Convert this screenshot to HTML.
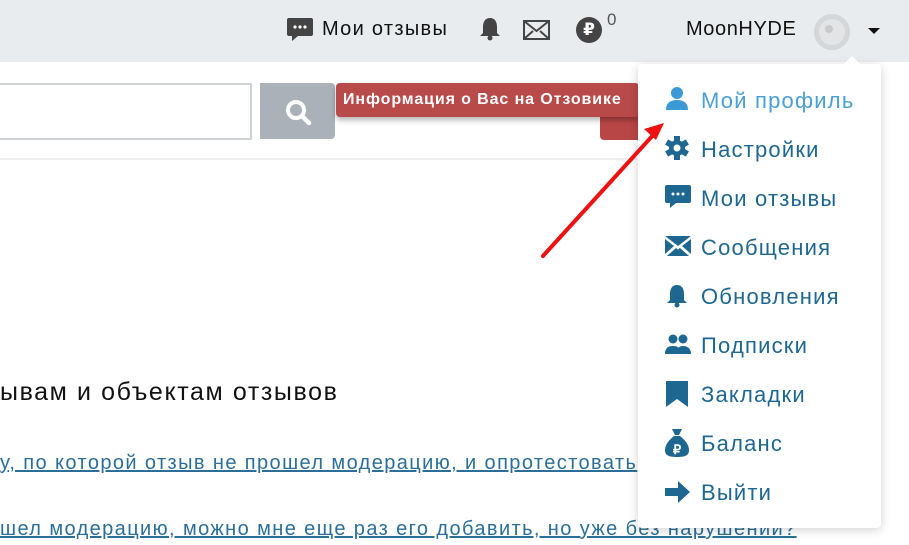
<!DOCTYPE html>
<html><head><meta charset="utf-8"><style>
body{margin:0;width:909px;height:545px;overflow:hidden;background:#fff;font-family:"Liberation Sans","DejaVu Sans",sans-serif;position:relative}
.a{position:absolute;white-space:nowrap}
#hdr{position:absolute;left:0;top:0;width:909px;height:62px;background:#e9ecef}
#menu{position:absolute;left:638px;top:64px;width:243px;height:464px;background:#fff;border-radius:4px;box-shadow:0 2px 10px rgba(0,0,0,.18)}
.it{position:absolute;left:63px;font-size:22px;letter-spacing:1.2px;color:#1d6790}
.ic{position:absolute;left:27px}
.lk{color:#2b6f98;text-decoration:underline;font-size:20px;letter-spacing:1.4px}
</style></head><body>
<div id="hdr"></div>
<svg class="a" style="left:287px;top:18px" width="26" height="24" viewBox="0 0 26 24"><path d="M2 0h22a2 2 0 0 1 2 2v14a2 2 0 0 1-2 2H11l-6 5v-5H2a2 2 0 0 1-2-2V2a2 2 0 0 1 2-2z" fill="#444"/><circle cx="8" cy="9" r="1.6" fill="#fff"/><circle cx="13" cy="9" r="1.6" fill="#fff"/><circle cx="18" cy="9" r="1.6" fill="#fff"/></svg>
<div class="a" style="left:322px;top:18px;font-size:20px;letter-spacing:1.3px;color:#111">Мои отзывы</div>
<svg class="a" style="left:479px;top:16px" width="22" height="26" viewBox="0 0 22 26"><path d="M11 2c-5 0-7 4-7 9v6l-3 3h20l-3-3v-6c0-5-2-9-7-9z" fill="#444"/><circle cx="11" cy="22" r="2.5" fill="#444"/></svg>
<svg class="a" style="left:523px;top:20px" width="27" height="20" viewBox="0 0 27 20"><rect x="1" y="1" width="25" height="18" fill="none" stroke="#444" stroke-width="2"/><path d="M1 1l12.5 10L26 1M1 19l9-8M26 19l-9-8" stroke="#444" stroke-width="2" fill="none"/></svg>
<div class="a" style="left:576px;top:17px;width:26px;height:26px;border-radius:50%;background:#444;color:#fff;font-size:17px;font-weight:bold;text-align:center;line-height:26px">₽</div>
<div class="a" style="left:607px;top:10px;font-size:17px;color:#555">0</div>
<div class="a" style="left:686px;top:18px;font-size:20px;letter-spacing:0.6px;color:#111">MoonHYDE</div>
<div class="a" style="left:814px;top:14px;width:26px;height:26px;border-radius:50%;border:5px solid #d4d6d8;background:#e2e4e6"></div>
<div class="a" style="left:825px;top:25px;width:8px;height:8px;border-radius:50%;background:#c8cacc"></div>
<div class="a" style="left:868px;top:28px;border:6px solid transparent;border-top:6px solid #111"></div>
<div class="a" style="left:0;top:158px;width:640px;height:2px;background:#eceef0"></div>
<div class="a" style="left:0;top:83px;width:250px;height:53px;border:2px solid #cfd3d6;border-left:none"></div>
<div class="a" style="left:260px;top:83px;width:75px;height:56px;background:#aab1b8;border-radius:0 4px 4px 0"></div>
<svg class="a" style="left:284px;top:98px" width="28" height="28" viewBox="0 0 28 28"><circle cx="12" cy="12" r="8" fill="none" stroke="#fff" stroke-width="4"/><path d="M18 18l7 7" stroke="#fff" stroke-width="4.5" stroke-linecap="round"/></svg>
<div class="a" style="left:600px;top:112px;width:40px;height:28px;background:#b94646;border-radius:0 0 0 4px"></div>
<div class="a" style="left:336px;top:83px;width:296px;height:34px;background:#b94a4a;border-radius:4px;box-shadow:0 3px 6px rgba(0,0,0,.3);color:#fff;font-size:16px;font-weight:bold;letter-spacing:0.9px;line-height:34px;padding-left:7px">Информация о Вас на Отзовике</div>
<div class="a" style="left:632px;top:92px;border:8px solid transparent;border-left:7px solid #b94a4a;border-right:none"></div>
<div class="a" style="left:0;top:378px;font-size:25px;letter-spacing:1.6px;color:#111">ывам и объектам отзывов</div>
<div class="a lk" style="left:0;top:452px">у, по которой отзыв не прошел модерацию, и опротестовать</div>
<div class="a lk" style="left:0;top:518px">шел модерацию, можно мне еще раз его добавить, но уже без нарушений?</div>
<div id="menu">
<div class="a" style="left:206px;top:-8px;border:8px solid transparent;border-bottom:8px solid #fff;border-top:none"></div>
<svg class="ic" style="top:22px" width="24" height="24" viewBox="0 0 24 24"><circle cx="12" cy="7" r="6" fill="#3b9ad6"/><path d="M1 24c0-7 4-10 11-10s11 3 11 10z" fill="#3b9ad6"/></svg>
<div class="it" style="top:24px;color:#4aa0d4">Мой профиль</div>
<svg class="ic" style="top:72px" width="24" height="24" viewBox="0 0 24 24"><g fill="#1d6790"><circle cx="12" cy="12" r="8"/><rect x="9" y="0" width="6" height="24"/><rect x="9" y="0" width="6" height="24" transform="rotate(60 12 12)"/><rect x="9" y="0" width="6" height="24" transform="rotate(120 12 12)"/></g><circle cx="12" cy="12" r="3.5" fill="#fff"/></svg>
<div class="it" style="top:73px">Настройки</div>
<svg class="ic" style="top:121px" width="26" height="24" viewBox="0 0 26 24"><path d="M2 0h22a2 2 0 0 1 2 2v14a2 2 0 0 1-2 2H11l-6 5v-5H2a2 2 0 0 1-2-2V2a2 2 0 0 1 2-2z" fill="#1d6790"/><circle cx="8" cy="9" r="1.5" fill="#fff"/><circle cx="13" cy="9" r="1.5" fill="#fff"/><circle cx="18" cy="9" r="1.5" fill="#fff"/></svg>
<div class="it" style="top:122px">Мои отзывы</div>
<svg class="ic" style="top:172px" width="26" height="20" viewBox="0 0 26 20"><path d="M0 0h26L13 10z M0 3l9 7-9 8z M26 3l-9 7 9 8z M2 20l9-8 2 1.5 2-1.5 9 8z" fill="#1d6790"/></svg>
<div class="it" style="top:171px">Сообщения</div>
<svg class="ic" style="top:219px" width="24" height="26" viewBox="0 0 22 26"><path d="M11 2c-5 0-7 4-7 9v6l-3 3h20l-3-3v-6c0-5-2-9-7-9z" fill="#1d6790"/><circle cx="11" cy="22" r="2.5" fill="#1d6790"/></svg>
<div class="it" style="top:220px">Обновления</div>
<svg class="ic" style="top:270px" width="26" height="20" viewBox="0 0 26 20"><g fill="#1d6790"><circle cx="8" cy="5" r="4.5"/><circle cx="18" cy="5" r="4.5"/><path d="M0 20c0-6 3-8 8-8s8 2 8 8zM12 20c0-6 2-8 6-8s8 2 8 8z"/></g></svg>
<div class="it" style="top:269px">Подписки</div>
<svg class="ic" style="top:316px" width="24" height="28" viewBox="0 0 24 28"><path d="M1 1h22v26l-11-8-11 8z" fill="#1d6790"/></svg>
<div class="it" style="top:318px">Закладки</div>
<svg class="ic" style="top:365px" width="24" height="28" viewBox="0 0 24 28"><path d="M7 0h10l-3 6h-4z" fill="#1d6790"/><path d="M9 7h6c5 4 9 9 9 14s-3 7-12 7S0 26 0 21 4 11 9 7z" fill="#1d6790"/><text x="12" y="25" font-size="13" font-weight="bold" fill="#fff" text-anchor="middle" font-family="Liberation Sans">₽</text></svg>
<div class="it" style="top:367px">Баланс</div>
<svg class="ic" style="top:416px" width="26" height="24" viewBox="0 0 26 24"><path d="M0 8h13V1l12 11-12 11v-7H0z" fill="#1d6790"/></svg>
<div class="it" style="top:416px">Выйти</div>
</div>
<svg class="a" style="left:0;top:0" width="909" height="545"><path d="M543 256L655 133" stroke="#ee1111" stroke-width="4" stroke-linecap="round"/><path d="M664 123l-20 6 12 11z" fill="#ee1111"/></svg>
</body></html>
